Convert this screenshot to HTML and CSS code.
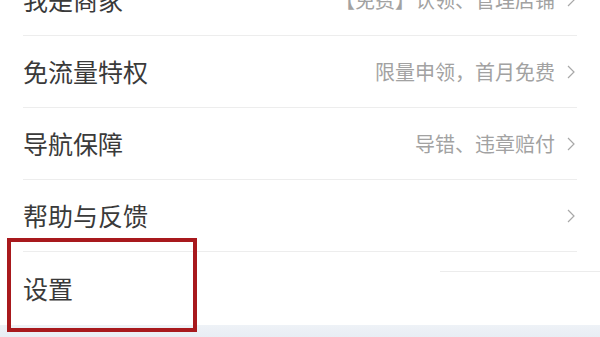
FILE: index.html
```html
<!DOCTYPE html>
<html lang="zh">
<head>
<meta charset="utf-8">
<link rel="stylesheet" href="styles.css">
</head>
<body>
<div class="screen">
  <ul class="menu">
    <li class="row">
      <span class="label">我是商家</span>
      <span class="extra">【免费】认领、管理店铺</span>
      <svg class="chev" viewBox="0 0 8 14"><polyline points="1,1 7,7 1,13"/></svg>
    </li>
    <li class="row">
      <span class="label">免流量特权</span>
      <span class="extra">限量申领，首月免费</span>
      <svg class="chev" viewBox="0 0 8 14"><polyline points="1,1 7,7 1,13"/></svg>
    </li>
    <li class="row">
      <span class="label">导航保障</span>
      <span class="extra">导错、违章赔付</span>
      <svg class="chev" viewBox="0 0 8 14"><polyline points="1,1 7,7 1,13"/></svg>
    </li>
    <li class="row">
      <span class="label">帮助与反馈</span>
      <span class="extra"></span>
      <svg class="chev" viewBox="0 0 8 14"><polyline points="1,1 7,7 1,13"/></svg>
    </li>
    <li class="row last">
      <span class="label">设置</span>
      <span class="ghost-line"></span>
    </li>
  </ul>
  <div class="bottom-band"></div>
  <div class="highlight"></div>
</div>
</body>
</html>
```

FILE: styles.css
```css
html, body {
  margin: 0;
  padding: 0;
  background: #ffffff;
}
body {
  width: 600px;
  height: 337px;
  overflow: hidden;
  font-family: "Noto Sans CJK SC", "Noto Sans", sans-serif;
}
.screen {
  position: relative;
  width: 600px;
  height: 337px;
  overflow: hidden;
  display: flex;
  flex-direction: column;
}
.menu {
  list-style: none;
  margin: -36px 0 0 0;
  padding: 0 23px 0 23px;
}
.row {
  position: relative;
  height: 71px;
  display: flex;
  align-items: center;
  border-bottom: 1px solid #ededed;
}
.row.last {
  border-bottom: none;
  height: 73px;
}
.label {
  font-size: 25px;
  color: #3a3a3a;
  line-height: 1;
  flex: 1;
}
.extra {
  font-size: 20px;
  color: #a2a2a2;
  line-height: 1;
}
.chev {
  width: 8px;
  height: 14px;
  margin-left: 12px;
  margin-right: 2px;
  fill: none;
  stroke: #a8a8a8;
  stroke-width: 1.2;
}
.ghost-line {
  position: absolute;
  right: -23px;
  top: 19px;
  width: 160px;
  height: 1px;
  background: #ececec;
}
.bottom-band {
  margin-top: auto;
  height: 12px;
  background: linear-gradient(#eef2f7, #e8edf4);
}
.highlight {
  position: absolute;
  left: 7px;
  top: 238px;
  width: 182px;
  height: 86px;
  border: 4px solid #a8191d;
}
```
